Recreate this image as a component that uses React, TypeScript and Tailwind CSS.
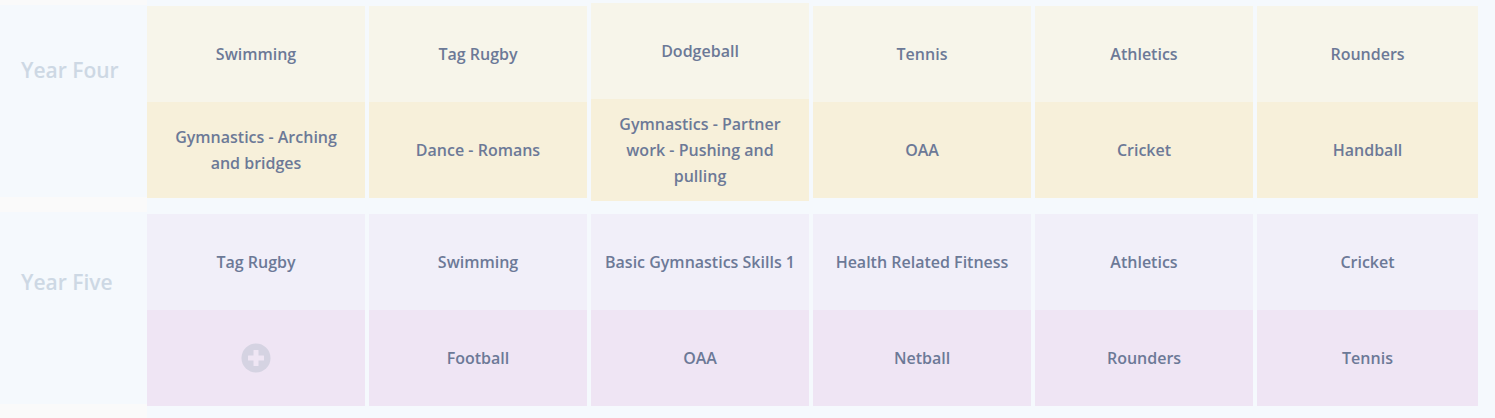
const yearFour = [
  ['Swimming', 'Gymnastics - Arching and bridges'],
  ['Tag Rugby', 'Dance - Romans'],
  ['Dodgeball', 'Gymnastics - Partner work - Pushing and pulling'],
  ['Tennis', 'OAA'],
  ['Athletics', 'Cricket'],
  ['Rounders', 'Handball'],
];

const yearFive = [
  ['Tag Rugby', null],
  ['Swimming', 'Football'],
  ['Basic Gymnastics Skills 1', 'OAA'],
  ['Health Related Fitness', 'Netball'],
  ['Athletics', 'Rounders'],
  ['Cricket', 'Tennis'],
];

function PlusIcon() {
  return (
    <svg width="30" height="30" viewBox="0 0 30 30">
      <circle cx="15" cy="15" r="14.5" fill="#d5d3e2" />
      <rect x="12.5" y="7" width="5" height="16" rx="0.5" fill="#efe6f4" />
      <rect x="7" y="12.5" width="16" height="5" rx="0.5" fill="#efe6f4" />
    </svg>
  );
}

function Cell({ text, bg }: { text: string | null; bg: string }) {
  return (
    <div className={`${bg} min-h-[96px] px-3 py-3 flex items-center justify-center text-center text-[16px] leading-[26px] font-semibold text-[#6c7997]`}>
      {text ?? <PlusIcon />}
    </div>
  );
}

function YearRow({
  label,
  terms,
  topBg,
  bottomBg,
  first,
}: {
  label: string;
  terms: (string | null)[][];
  topBg: string;
  bottomBg: string;
  first?: boolean;
}) {
  return (
    <div className="flex">
      <div className={`w-[147px] shrink-0 bg-[#fafafa] flex flex-col ${first ? 'pt-[5px] pb-[4px]' : 'pt-[11px] pb-[2px]'}`}>
        <div
          className={`flex-1 bg-[#f5f9fd] pl-[21px] text-[21px] leading-[28px] font-semibold text-[#cdd8e4] ${first ? 'pt-[51px]' : 'pt-[56px]'}`}
        >
          {label}
        </div>
      </div>
      <div className={`w-[1331px] grid grid-cols-[repeat(5,218px)_1fr] gap-x-[4px] items-center ${first ? 'pt-[3px]' : 'pt-[13px]'}`}>
        {terms.map((col, i) => (
          <div key={i} className="flex flex-col">
            <Cell text={col[0]} bg={topBg} />
            <Cell text={col[1]} bg={bottomBg} />
          </div>
        ))}
      </div>
    </div>
  );
}

export default function App() {
  return (
    <div className="min-h-screen bg-[#f5f9fd] flex flex-col" style={{ fontFamily: '"Open Sans", sans-serif' }}>
      <YearRow label="Year Four" terms={yearFour} topBg="bg-[#f7f5ea]" bottomBg="bg-[#f7f0da]" first />
      <YearRow label="Year Five" terms={yearFive} topBg="bg-[#f1eff9]" bottomBg="bg-[#efe5f4]" />
      <div className="flex-1 flex">
        <div className="w-[147px] bg-[#fafafa]" />
      </div>
    </div>
  );
}
